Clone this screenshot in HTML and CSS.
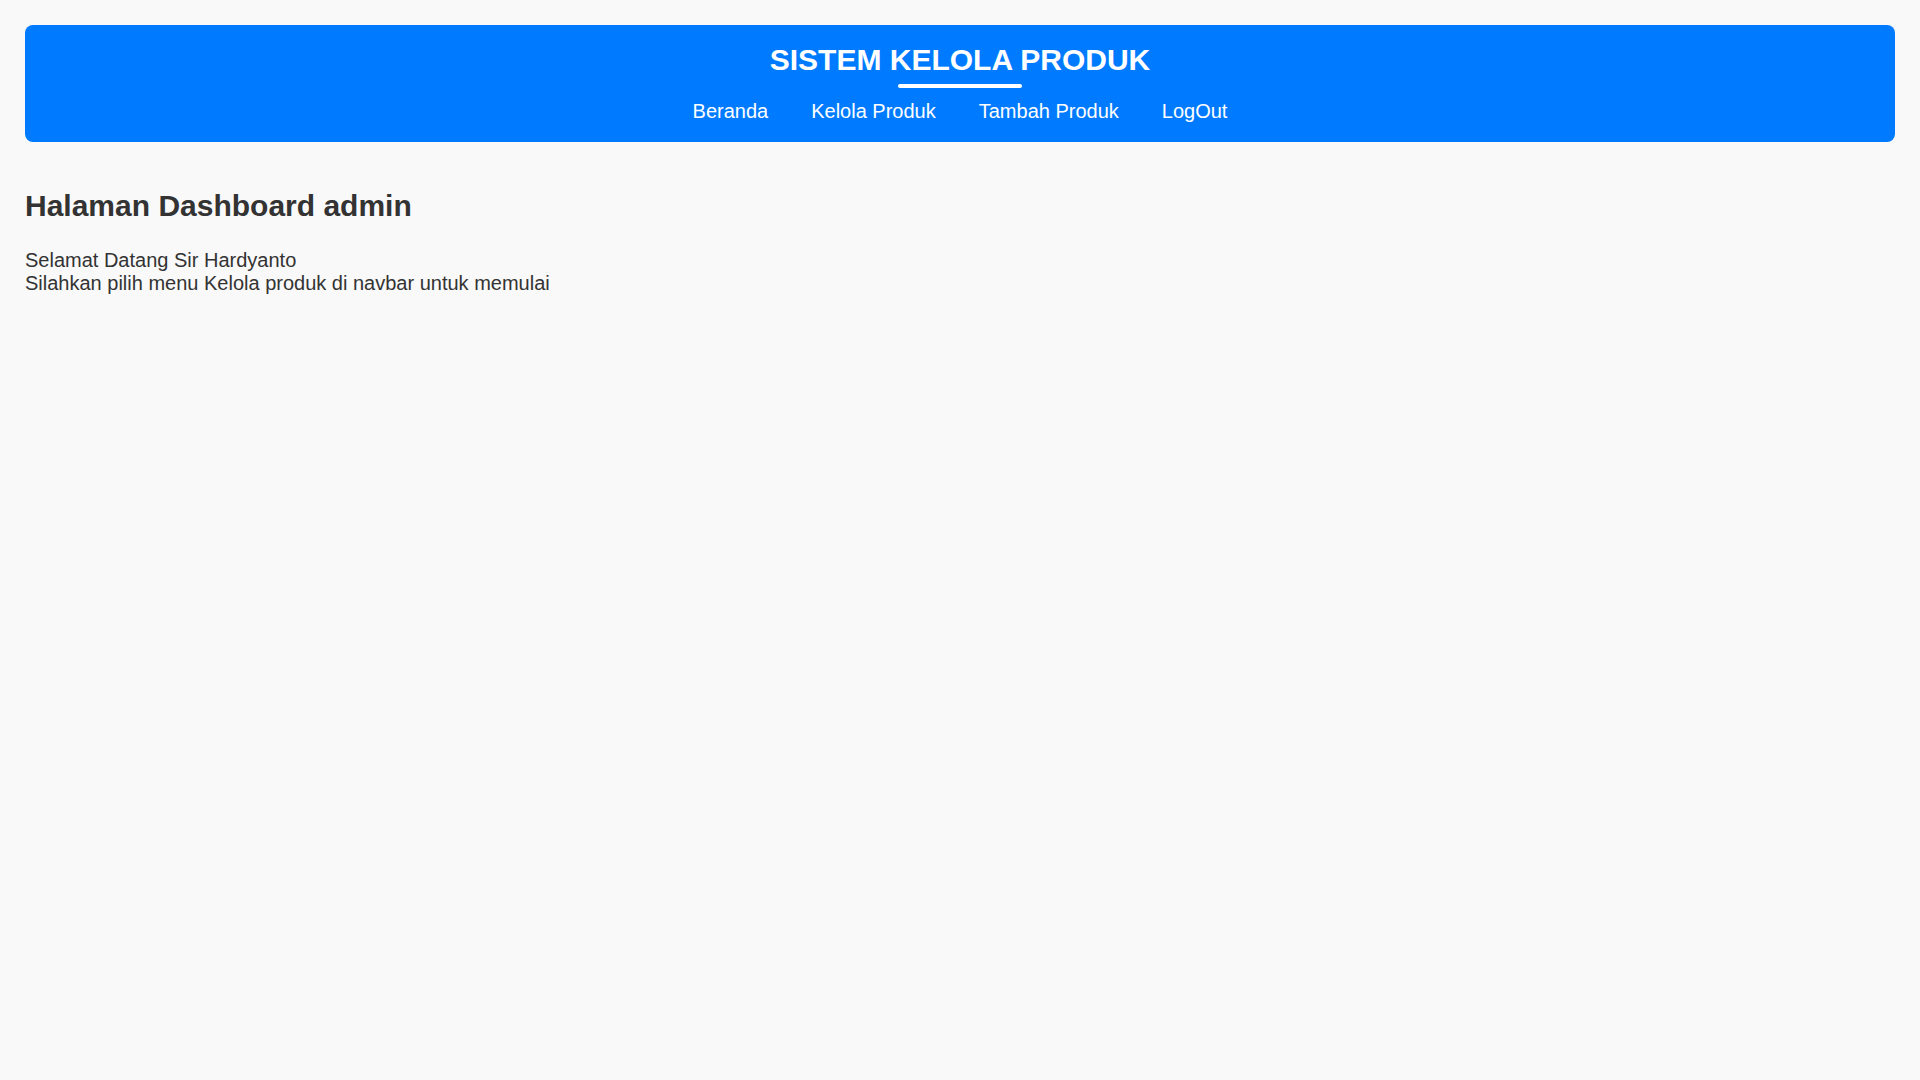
FILE: index.html
```html
<!DOCTYPE html>
<html lang="id">
<head>
<meta charset="utf-8">
<title>Dashboard Admin</title>
<link rel="stylesheet" href="styles.css">
</head>
<body>
<header class="topbar">
  <h1 class="brand">SISTEM KELOLA PRODUK</h1>
  <div class="brand-line"></div>
  <nav class="menu">
    <a href="#">Beranda</a>
    <a href="#">Kelola Produk</a>
    <a href="#">Tambah Produk</a>
    <a href="#">LogOut</a>
  </nav>
</header>
<main class="content">
  <h2 class="page-title">Halaman Dashboard admin</h2>
  <p class="welcome">Selamat Datang Sir Hardyanto<br>Silahkan pilih menu Kelola produk di navbar untuk memulai</p>
</main>
</body>
</html>
```
FILE: styles.css
```css
html, body {
  margin: 0;
  padding: 0;
}
body {
  background: #f9f9f9;
  color: #333333;
  font-family: "Liberation Sans", Arial, sans-serif;
  padding: 25px;
}
.topbar {
  background: #007bff;
  border-radius: 8px;
  padding: 18px 20px 19px;
  display: flex;
  flex-direction: column;
  align-items: center;
  color: #ffffff;
}
.brand {
  margin: 0;
  font-size: 30px;
  line-height: 34px;
  font-weight: bold;
}
.brand-line {
  width: 124px;
  height: 4px;
  border-radius: 2px;
  background: #ffffff;
  margin-top: 7px;
}
.menu {
  display: flex;
  gap: 43px;
  margin-top: 12px;
}
.menu a {
  color: #ffffff;
  text-decoration: none;
  font-size: 20px;
  line-height: 23px;
}
.content {
  padding-top: 47px;
}
.page-title {
  margin: 0;
  font-size: 30px;
  line-height: 34px;
  font-weight: bold;
}
.welcome {
  margin: 26px 0 0;
  font-size: 20px;
  line-height: 23px;
}
```
